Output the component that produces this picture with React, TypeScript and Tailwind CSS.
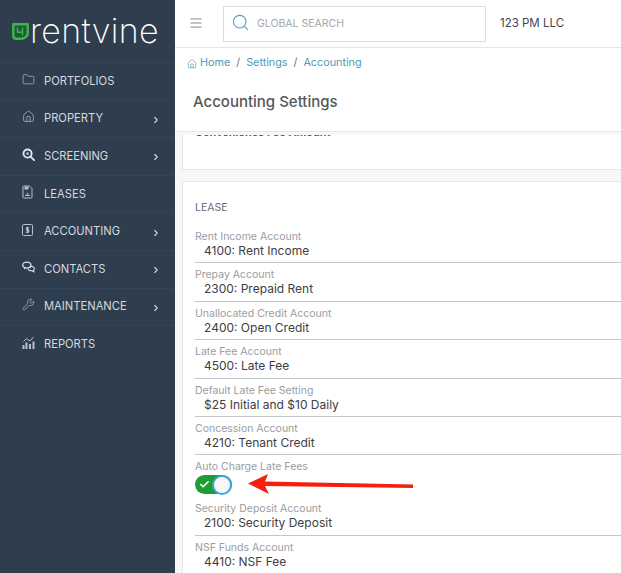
import React from "react";
import { Folder, Home, ChevronRight, Wrench, Menu, Search, Check } from "lucide-react";

const IconScreening = () => (
  <svg width="13" height="13" viewBox="0 0 14 14" fill="none">
    <circle cx="6" cy="6" r="4.4" stroke="#e4e9ed" strokeWidth="2" />
    <path d="M9.500 9.500 13 13" stroke="#e4e9ed" strokeWidth="2" strokeLinecap="round" />
    <circle cx="6" cy="6" r="1.500" fill="#b5c0ca" />
  </svg>
);
const IconLease = () => (
  <svg width="11" height="14" viewBox="0 0 11 14" fill="none">
    <path d="M1 1.500c0-.3.2-.5.5-.5H7.500L10 3.500v9c0 .3-.2.5-.5.5h-8c-.3 0-.5-.2-.5-.5z" stroke="#b5c0ca" />
    <rect x="2.500" y="1.500" width="4" height="3" fill="#b5c0ca" />
    <path d="M3 10.500h5" stroke="#b5c0ca" />
    <path d="M5.500 7.500 7 9.500H4z" fill="#b5c0ca" />
  </svg>
);
const IconAccounting = () => (
  <svg width="11" height="12" viewBox="0 0 11 12" fill="none">
    <rect x=".5" y=".5" width="10" height="11" rx="1" stroke="#b5c0ca" />
    <path d="M7.200 3.800H4.400v2h2.400v2.400H3.800M5.500 2.800v6.400" stroke="#dfe5ea" strokeWidth=".8" />
  </svg>
);
const IconContacts = () => (
  <svg width="13" height="12" viewBox="0 0 14 12" fill="none">
    <ellipse cx="5.200" cy="4" rx="4.400" ry="3.200" stroke="#dfe5ea" strokeWidth="1.300" />
    <path d="M8.500 5.500c2.300-.6 4.800.4 4.800 2.300 0 .8-.4 1.300-1 1.700l.5 1.700-2.200-1.100c-1.600.2-3.300-.4-4-1.700" stroke="#dfe5ea" strokeWidth="1.100" />
    <path d="M2.500 6.600 2 8.600l2.400-1.400" fill="#dfe5ea" />
  </svg>
);
const IconReports = () => (
  <svg width="13" height="13" viewBox="0 0 13 13" fill="#b5c0ca">
    <rect x="0.500" y="9" width="2" height="4" />
    <rect x="3.500" y="6.500" width="2" height="6.500" />
    <rect x="7" y="8" width="2" height="5" />
    <rect x="10.500" y="5.500" width="2" height="7.500" />
    <path d="M1.500 5.500 4.500 2.500 8 5l3.500-4" fill="none" stroke="#b5c0ca" strokeWidth="1" />
  </svg>
);

const nav: { label: string; icon: React.ReactNode; more?: boolean }[] = [
  { label: "PORTFOLIOS", icon: <Folder size={13} strokeWidth={1.300} color="#b5c0ca" /> },
  { label: "PROPERTY", icon: <Home size={13} strokeWidth={1.300} color="#b5c0ca" />, more: true },
  { label: "SCREENING", icon: <IconScreening />, more: true },
  { label: "LEASES", icon: <IconLease /> },
  { label: "ACCOUNTING", icon: <IconAccounting />, more: true },
  { label: "CONTACTS", icon: <IconContacts />, more: true },
  { label: "MAINTENANCE", icon: <Wrench size={13} strokeWidth={1.300} color="#b5c0ca" />, more: true },
  { label: "REPORTS", icon: <IconReports /> },
];

const fields = [
  ["Rent Income Account", "4100: Rent Income"],
  ["Prepay Account", "2300: Prepaid Rent"],
  ["Unallocated Credit Account", "2400: Open Credit"],
  ["Late Fee Account", "4500: Late Fee"],
  ["Default Late Fee Setting", "$25 Initial and $10 Daily"],
  ["Concession Account", "4210: Tenant Credit"],
];
const fieldsAfter = [
  ["Security Deposit Account", "2100: Security Deposit"],
  ["NSF Funds Account", "4410: NSF Fee"],
];

function Field({ label, value }: { label: string; value: string }) {
  return (
    <div className="h-[38.4px] shrink-0 pt-[5px] border-b border-[#c4c7ca]">
      <div className="text-[10.5px] leading-[13px] text-[#9a9da1]">{label}</div>
      <div className="pl-[9px] text-[12px] leading-[15px] text-[#3d4043]">{value}</div>
    </div>
  );
}

export default function App() {
  return (
    <div className="flex h-[573px] w-[621px] overflow-hidden bg-white font-[family-name:Inter,sans-serif]">
      <aside className="flex w-[175px] shrink-0 flex-col bg-[#2e3e4f]">
        <div className="flex h-[62px] shrink-0 items-center pl-[12px]">
          <svg width="17" height="17" viewBox="0 0 17 17" fill="none" className="shrink-0">
            <path d="M1.300 1.300h14.400v8.400c0 3.300-2.700 6-6 6H4.300c-1.700 0-3-1.300-3-3z" fill="#1f5b3a" stroke="#3db54a" strokeWidth="2.400" strokeLinejoin="round" />
            <path d="M5.500 4.500v4.800h5.500M10.500 4.500v8" stroke="#3db54a" strokeWidth="1.400" />
          </svg>
          <span className="ml-[1px] text-[34px] font-extralight leading-none tracking-[0.3px] text-white">rentvine</span>
        </div>
        {nav.map((n) => (
          <div key={n.label} className="flex h-[37.6px] shrink-0 items-center border-t border-[#334456] pl-[22px] pr-[14px]">
            <span className="flex w-[22px] shrink-0 -translate-y-[2px] items-center">{n.icon}</span>
            <span className="text-[11.2px] text-[#d3d9de]">{n.label}</span>
            {n.more && <ChevronRight size={10} strokeWidth={2.600} color="#d3d9de" className="ml-auto translate-y-[1px]" />}
          </div>
        ))}
      </aside>
      <main className="flex min-w-0 flex-1 flex-col">
        <header className="flex h-[48px] shrink-0 items-center border-b border-[#e1e5ec] pl-[14px]">
          <Menu size={14} strokeWidth={1.500} color="#7b7f83" className="-translate-y-[1px] scale-x-110" />
          <div className="ml-[20px] flex h-[36px] w-[263px] items-center border border-[#d5dde6] pl-[7px]">
            <Search size={19} strokeWidth={1.300} color="#4d9fc0" className="-translate-y-[1px]" />
            <span className="ml-[7px] text-[10.5px] text-[#a3a6a9]">GLOBAL SEARCH</span>
          </div>
          <span className="ml-[14px] text-[11.5px] text-[#3b4752]">123 PM LLC</span>
        </header>
        <div className="flex h-[30px] shrink-0 items-center pl-[12px] pt-[1px] text-[10.8px] text-[#4a9bb8]">
          <Home size={10} strokeWidth={1.500} className="mr-[3px]" />
          <span>Home</span>
          <span className="mx-[6px] text-[#6b7278]">/</span>
          <span>Settings</span>
          <span className="mx-[6px] text-[#6b7278]">/</span>
          <span>Accounting</span>
        </div>
        <div className="flex h-[54px] shrink-0 items-start border-b border-[#e4e7eb] pl-[18px] pt-[14px] text-[15px] font-medium leading-[20px] text-[#55585b]">
          Accounting Settings
        </div>
        <div className="flex min-h-0 flex-1 flex-col overflow-hidden bg-[#f5f7f9]">
          <div className="h-[3px] shrink-0" />
          <div className="flex min-h-0 flex-1 flex-col pl-[7px]">
            <div className="h-[35px] shrink-0 overflow-hidden border-b border-l border-[#e4e7eb] bg-white pl-[12px]">
              <div className="-mt-[9px] text-[10.8px] font-bold leading-[14px] text-[#55585b]">Convenience Fee Amount</div>
            </div>
            <div className="mt-[11px] flex flex-1 flex-col border-l border-t border-[#e4e7eb] bg-white pl-[12px]">
              <div className="pt-[19px] text-[10.5px] leading-[13px] text-[#6a6d70]">LEASE</div>
              <div className="mt-[11px]">
                {fields.map(([l, v]) => <Field key={l} label={l} value={v} />)}
              </div>
              <div className="h-[42px] shrink-0 pt-[5px]">
                <div className="text-[10.5px] leading-[13px] text-[#9a9da1]">Auto Charge Late Fees</div>
                <div className="mt-[2px] flex h-[19px] w-[37px] items-center rounded-full bg-[#1f9d33] pl-[4px]">
                  <Check size={11} strokeWidth={3.500} color="#fff" />
                  <span className="ml-auto h-[20px] w-[20px] shrink-0 rounded-full border-2 border-[#3fa6d8] bg-[#f7f7f7]" />
                </div>
              </div>
              {fieldsAfter.map(([l, v]) => <Field key={l} label={l} value={v} />)}
            </div>
          </div>
        </div>
      </main>
      <svg className="absolute left-[247px] top-[473px]" width="168" height="22" viewBox="0 0 168 22">
        <path d="M1 10.500 21 1 18 8.500 166 11.500v3.500L18 13 22 21z" fill="#f4200f" />
      </svg>
    </div>
  );
}
